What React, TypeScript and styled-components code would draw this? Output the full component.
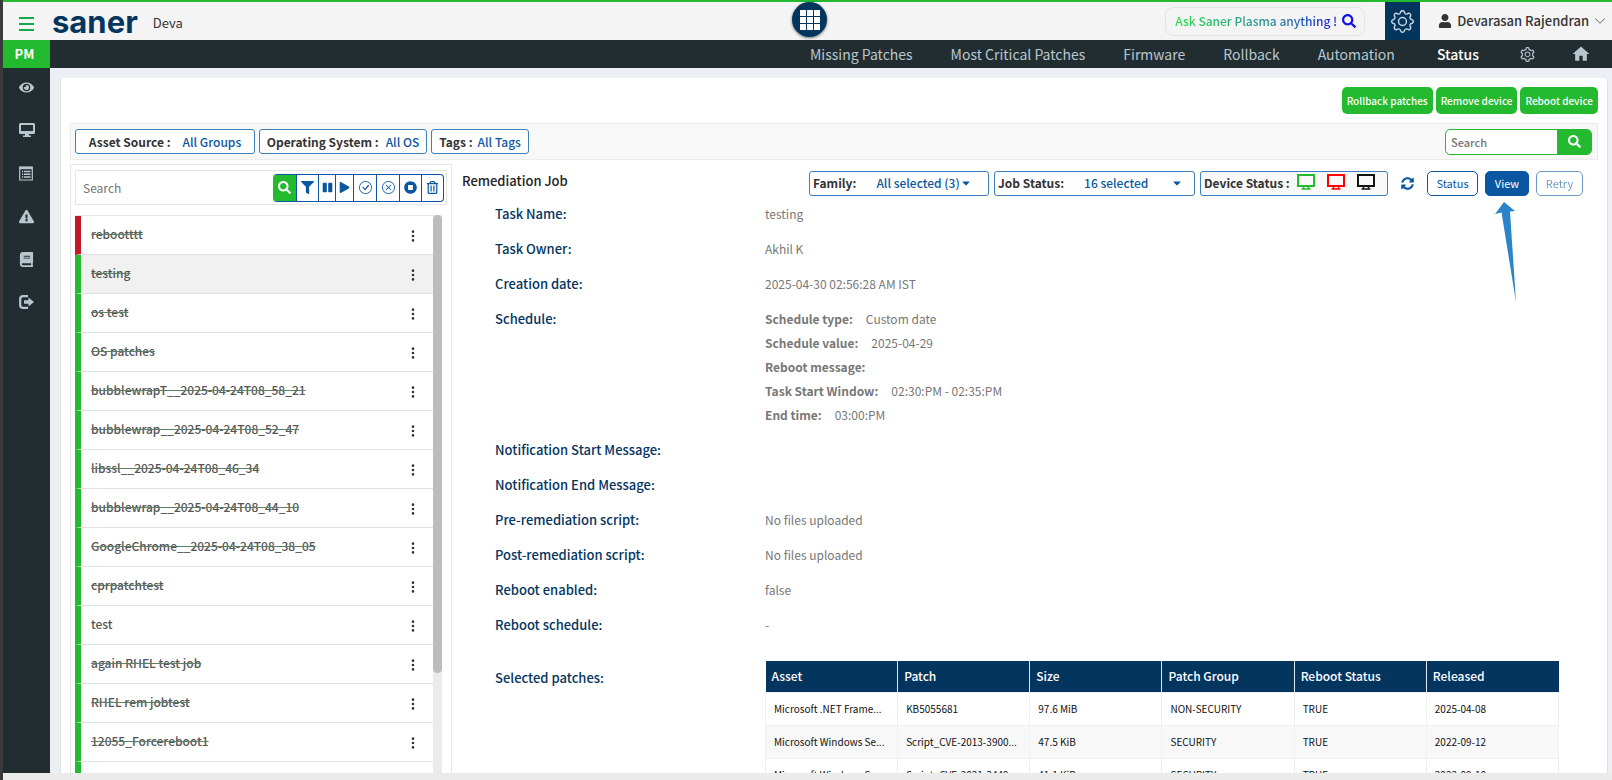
import React from 'react';
import styled, { createGlobalStyle, css } from 'styled-components';
import { FaSearch, FaFilter, FaPause, FaPlay, FaStopCircle, FaRegTrashAlt, FaEye, FaExclamationTriangle, FaBook, FaUser, FaSyncAlt, FaCaretDown } from 'react-icons/fa';
import { BsCheckCircle, BsXCircle, BsGear, BsChevronDown, BsThreeDotsVertical } from 'react-icons/bs';
import { AiOutlineSetting } from 'react-icons/ai';
import { MdHome } from 'react-icons/md';

const green = '#23ba2f';
const navy = '#04355f';
const blue = '#0a57a1';
const slate = '#222d32';
const sans = '"Noto Sans CJK SC", "Open Sans", sans-serif';

const GlobalStyle = createGlobalStyle`
  * { box-sizing: border-box; }
  body { margin: 0; background: #ebebeb; font-family: ${sans}; font-size: 12px; line-height: 20px; color: #333; }
  button, input { font: inherit; color: inherit; margin: 0; }
  button { padding: 0; border: 0; background: none; cursor: pointer; }
  input { min-width: 0; border: 0; outline: 0; background: none; }
  input::placeholder { color: #757575; opacity: 1; }
  a { color: inherit; text-decoration: none; }
  ul, dl, dd, h1, p { margin: 0; padding: 0; }
  ul { list-style: none; }
`;

const Shell = styled.div`
  height: 100vh;
  display: flex;
  flex-direction: column;
  border-left: 3px solid #3a3a3a;
  padding-bottom: 7px;
`;
const Header = styled.header`
  flex: none;
  display: flex;
  align-items: center;
  justify-content: space-between;
  height: 40px;
  border-top: 2px solid ${green};
  background: #f4f4f4;
`;
const HeaderSide = styled.div<{ $end?: boolean }>`
  flex: 1;
  height: 100%;
  display: flex;
  align-items: center;
  justify-content: ${p => (p.$end ? 'flex-end' : 'flex-start')};
`;
const MenuButton = styled.button`
  width: 15px;
  height: 14px;
  margin: 6px 18px 0 16px;
  display: flex;
  flex-direction: column;
  justify-content: space-between;
  span { width: 100%; height: 2px; background: #11a84b; }
`;
const Logo = styled.a`
  font: 700 31px/36px Inter, sans-serif;
  color: ${navy};
  margin-right: 15px;
  padding-top: 2px;
`;
const Account = styled.span`
  font-size: 13px;
  padding-top: 3px;
`;
const AppsButton = styled.button`
  width: 35px;
  height: 35px;
  margin: -3px 0 0 4px;
  border-radius: 50%;
  background: ${navy};
  box-shadow: 0 1px 3px #0008;
  display: flex;
  align-items: center;
  justify-content: center;
  svg { width: 20px; height: 20px; }
`;
const Ask = styled.button`
  height: 29px;
  margin-right: 20px;
  padding: 0 8px 0 9px;
  display: flex;
  align-items: center;
  gap: 5px;
  border: 1px solid #e4e4e4;
  border-radius: 8px;
  font-size: 12px;
  font-weight: 500;
  span {
    background: linear-gradient(90deg, #27e04a, #2a7fa0 65%, #1a1ae0);
    background-clip: text;
    color: transparent;
  }
  svg { color: #1414e6; font-size: 14px; }
`;
const SettingsButton = styled.button`
  width: 35px;
  height: 100%;
  display: flex;
  align-items: center;
  justify-content: center;
  background: ${navy};
  color: #c7d6e2;
  font-size: 23px;
`;
const UserButton = styled.button`
  display: flex;
  align-items: center;
  gap: 5px;
  padding: 0 6px 0 18px;
  font-size: 13px;
  font-weight: 500;
  svg:first-child { font-size: 14px; }
  svg:last-child { font-size: 12px; color: #666; }
`;
const Body = styled.div`
  flex: 1;
  min-height: 0;
  display: flex;
`;
const Sidebar = styled.nav`
  flex: none;
  width: 47px;
  background: ${slate};
  color: #b8c7ce;
`;
const Product = styled.div`
  height: 28px;
  background: ${green};
  color: #fff;
  font-size: 13px;
  font-weight: 700;
  line-height: 27px;
  padding-right: 4px;
  text-align: center;
`;
const SideList = styled.ul`
  display: flex;
  flex-direction: column;
  gap: 27px;
  padding: 11px 0 0 16px;
  a { display: flex; height: 16px; align-items: center; font-size: 15px; }
`;
const Main = styled.div`
  flex: 1;
  min-width: 0;
  display: flex;
  flex-direction: column;
`;
const NavBar = styled.nav`
  flex: none;
  height: 28px;
  display: flex;
  align-items: center;
  justify-content: flex-end;
  gap: 38px;
  padding-right: 21px;
  background: ${slate};
  color: #b8c7ce;
  font-size: 14px;
`;
const NavLink = styled.a<{ $on?: boolean }>`
  display: flex;
  color: ${p => (p.$on ? '#fff' : 'inherit')};
  font-weight: ${p => (p.$on ? 500 : 400)};
  margin-left: ${p => (p.$on ? 4 : 0)}px;
`;
const NavIcon = styled.a<{ $size: number }>`
  display: flex;
  width: 20px;
  justify-content: center;
  font-size: ${p => p.$size}px;
  & + & { margin-left: -4px; }
`;
const Page = styled.main`
  flex: 1;
  min-height: 0;
  padding: 10px 4px 0 10px;
  background: #ecf0f5;
  display: flex;
`;
const Card = styled.div`
  flex: 1;
  min-width: 0;
  display: flex;
  flex-direction: column;
  padding: 9px 9px 0;
  border: 1px solid #dce1ea;
  border-width: 0 1px;
  border-radius: 4px 4px 0 0;
  background: #fff;
  overflow: hidden;
`;
const Actions = styled.div`
  flex: none;
  display: flex;
  justify-content: flex-end;
  gap: 3px;
`;
const ActionButton = styled.button`
  height: 27px;
  padding: 0 5px;
  border-radius: 5px;
  background: ${green};
  color: #fff;
  font-size: 10px;
  font-weight: 500;
`;
const FilterBar = styled.div`
  flex: none;
  height: 37px;
  margin-top: 9px;
  padding: 0 5px 0 4px;
  display: flex;
  align-items: center;
  gap: 4px;
  background: #f8f8f8;
  border: 1px solid #ececec;
`;
const Select = styled.button<{ $w: number; $gap?: number; $start?: boolean; $tint?: boolean }>`
  width: ${p => p.$w}px;
  height: 25px;
  display: flex;
  align-items: center;
  justify-content: ${p => (p.$start ? 'flex-start' : 'center')};
  gap: ${p => p.$gap || 7}px;
  padding: 0 3px;
  border: 1px solid #3c7fbb;
  border-radius: 3px;
  background: ${p => (p.$tint ? '#f8f8f8' : '#fff')};
  color: ${blue};
  font-size: 12px;
  font-weight: 500;
  white-space: nowrap;
  b { color: #333; }
  span { display: flex; align-items: center; }
`;
const WideValue = styled.span`
  flex: 1;
  justify-content: space-between;
  padding-right: 8px;
`;
const AssetSearch = styled.form`
  margin-left: auto;
  width: 147px;
  height: 26px;
  display: flex;
  border: 1px solid ${green};
  border-radius: 5px;
  background: #fff;
  overflow: hidden;
  input { flex: 1; padding: 0 5px; font-size: 11px; font-weight: 500; }
  button { width: 34px; display: flex; align-items: center; justify-content: center; background: ${green}; color: #fff; font-size: 13px; }
`;
const Columns = styled.div`
  flex: 1;
  min-height: 0;
  display: flex;
  margin-top: 4px;
`;
const Jobs = styled.section`
  flex: none;
  width: 382px;
  display: flex;
  flex-direction: column;
  padding: 5px 4px 0;
  border: 1px solid #e6e6e6;
  border-bottom: 0;
`;
const JobTools = styled.form`
  flex: none;
  display: flex;
  align-items: center;
  height: 35px;
  padding: 0 2px 0 5px;
  border: 1px solid #e6e6e6;
  input { flex: 1; }
`;
const ToolGroup = styled.div`
  display: flex;
  height: 28px;
  border: 1px solid ${blue};
  border-left: 0;
  border-radius: 4px;
  overflow: hidden;
`;
const Tool = styled.button<{ $w: number; $on?: boolean }>`
  width: ${p => p.$w}px;
  display: flex;
  align-items: center;
  justify-content: center;
  font-size: 13px;
  color: ${blue};
  & + & { border-left: 1px solid ${blue}; }
  ${p => p.$w < 20 && css`font-size: 11px;`}
  ${p => p.$on && css`
    background: ${green};
    color: #fff;
    border-radius: 3px 0 0 3px;
    margin: -1px 0;
  `}
`;
const JobScroll = styled.div`
  flex: 1;
  min-height: 0;
  display: flex;
  margin: 10px 5px 0 0;
`;
const JobList = styled.ul`
  flex: 1;
  overflow: hidden;
  border-top: 1px solid #e8e8e8;
`;
const Track = styled.div`
  width: 9px;
  background: #ebebeb;
`;
const Thumb = styled.div`
  height: 82%;
  border-radius: 5px;
  background: #bcbcbc;
`;
const JobRow = styled.li<{ $tone: string; $on?: boolean }>`
  height: 39px;
  display: flex;
  align-items: center;
  justify-content: space-between;
  padding: 0 13px 2px 10px;
  border-left: 6px solid ${p => p.$tone};
  border-bottom: 1px solid #e2e2e2;
  background: ${p => (p.$on ? '#f1f1f1' : '#fff')};
  button { display: flex; font-size: 14px; color: #333; padding-top: 3px; }
`;
const JobName = styled.a<{ $done: boolean }>`
  font-size: 12px;
  font-weight: 500;
  color: #555;
  text-decoration: ${p => (p.$done ? 'line-through 1px #5f7f66' : 'none')};
`;
const Details = styled.section`
  flex: 1;
  min-width: 0;
  padding: 6px 15px 0 10px;
  display: flex;
  flex-direction: column;
`;
const DetailHead = styled.div`
  flex: none;
  display: flex;
  align-items: center;
  height: 26px;
  gap: 5px;
`;
const Title = styled.h1`
  flex: 1;
  font-size: 13px;
  font-weight: 500;
  line-height: 20px;
  padding-bottom: 4px;
  color: #222;
`;
const Devices = styled.span`
  gap: 12px;
  padding-bottom: 2px;
`;
const Refresh = styled.button`
  display: flex;
  margin: 0 8px;
  color: ${blue};
  font-size: 13px;
`;
const Pill = styled.button<{ $w: number; $on?: boolean }>`
  width: ${p => p.$w}px;
  height: 25px;
  margin-right: 2px;
  border: 1px solid ${blue};
  border-radius: 5px;
  font-size: 11px;
  color: ${p => (p.$on ? '#fff' : blue)};
  background: ${p => (p.$on ? blue : '#fff')};
  &:disabled { opacity: .6; margin-right: 0; }
`;
const DetailList = styled.dl`
  display: grid;
  grid-template-columns: 270px 1fr;
  row-gap: 15px;
  padding: 8px 24px 0 33px;
  font-size: 12px;
  color: #777;
`;
const Term = styled.dt<{ $gap?: number }>`
  font-size: 13px;
  font-weight: 500;
  color: ${navy};
  padding-top: ${p => p.$gap || 0}px;
`;
const Schedule = styled.dd`
  display: flex;
  flex-direction: column;
  gap: 4px;
  b { margin-right: 13px; }
`;
const PatchTable = styled.table`
  width: 100%;
  margin-top: 11px;
  table-layout: fixed;
  border-collapse: collapse;
  color: #111;
  font-size: 10px;
  th { height: 31px; padding: 0 6px; text-align: left; background: ${navy}; color: #fff; font-size: 12px; font-weight: 500; }
  th + th { border-left: 1px solid #dfe6ee; }
  td { height: 33px; padding: 0 8px; border: 1px solid #f0f0f0; white-space: nowrap; overflow: hidden; }
  tbody tr:nth-child(even) { background: #f8f8f8; }
`;
const Pointer = styled.svg`
  position: absolute;
  top: 31px;
  left: 10px;
  pointer-events: none;
`;
const PointerAnchor = styled.span`
  position: relative;
  display: flex;
`;

const MonitorIcon = ({ color }: { color: string }) => (
  <svg width="18" height="16" viewBox="0 0 18 16" fill="none" stroke={color} strokeWidth="2">
    <path d="M1 1H17V12H1Z" />
    <path d="M6.500 12.500V15M11.500 12.500V15M4.500 15H13.500" strokeWidth="1.500" />
  </svg>
);
const DesktopIcon = () => (
  <svg width="16" height="14" viewBox="0 0 16 14">
    <path d="M1.500 0H14.500Q16 0 16 1.500V9.500Q16 11 14.500 11H10V12.500H12V14H4V12.500H6V11H1.500Q0 11 0 9.500V1.500Q0 0 1.500 0ZM2 2V8H14V2Z" fill="currentColor" fillRule="evenodd" />
  </svg>
);
const ReportIcon = () => (
  <svg width="14" height="15" viewBox="0 0 14 15" fill="none" stroke="currentColor">
    <path d="M.7 1H13.3V14H.7Z" strokeWidth="1.2" />
    <path d="M.7 2H13.3" strokeWidth="2.4" />
    <path d="M3 5.5H4.2M5 5.5H11.5M3 8.2H4.2M5 8.2H11.5M3 10.9H4.2M5 10.9H11.5" strokeWidth="1.5" />
  </svg>
);
const ExitIcon = () => (
  <svg width="15" height="14" viewBox="0 0 15 14">
    <path d="M9 1.200H4Q1.200 1.200 1.200 4V10Q1.200 12.800 4 12.800H9" fill="none" stroke="currentColor" strokeWidth="2.200" />
    <path d="M5 5.200H9.500V2.500L15 7L9.500 11.500V8.800H5Z" fill="currentColor" />
  </svg>
);

const jobs: [string, boolean][] = [
  ['rebootttt', true], ['testing', true], ['os test', true], ['OS patches', true],
  ['bubblewrapT__2025-04-24T08_58_21', true], ['bubblewrap__2025-04-24T08_52_47', true],
  ['libssl__2025-04-24T08_46_34', true], ['bubblewrap__2025-04-24T08_44_10', true],
  ['GoogleChrome__2025-04-24T08_38_05', true], ['cprpatchtest', true], ['test', false],
  ['again RHEL test job', true], ['RHEL rem jobtest', true], ['12055_Forcereboot1', true],
];
const schedule = [
  ['Schedule type:', 'Custom date'], ['Schedule value:', '2025-04-29'], ['Reboot message:', ''],
  ['Task Start Window:', '02:30:PM - 02:35:PM'], ['End time:', '03:00:PM'],
];
const before = [['Task Name:', 'testing'], ['Task Owner:', 'Akhil K'], ['Creation date:', '2025-04-30 02:56:28 AM IST']];
const after = [
  ['Notification Start Message:', ''], ['Notification End Message:', ''],
  ['Pre-remediation script:', 'No files uploaded'], ['Post-remediation script:', 'No files uploaded'],
  ['Reboot enabled:', 'false'], ['Reboot schedule:', '-'],
];
const columns = ['Asset', 'Patch', 'Size', 'Patch Group', 'Reboot Status', 'Released'];
const patches = [
  ['Microsoft .NET Frame...', 'KB5055681', '97.6 MiB', 'NON-SECURITY', 'TRUE', '2025-04-08'],
  ['Microsoft Windows Se...', 'Script_CVE-2013-3900...', '47.5 KiB', 'SECURITY', 'TRUE', '2022-09-12'],
  ['Microsoft Windows Se...', 'Script_CVE-2021-3449...', '41.1 KiB', 'SECURITY', 'TRUE', '2022-09-18'],
];
const sideItems = [
  ['Visibility', <FaEye />], ['Devices', <DesktopIcon />], ['Reports', <ReportIcon />],
  ['Alerts', <FaExclamationTriangle />], ['Audit', <FaBook />], ['Sign out', <ExitIcon />],
] as [string, React.ReactNode][];

export default function App() {
  const stop = (e: React.FormEvent) => e.preventDefault();
  return (
    <Shell>
      <GlobalStyle />
      <Header>
        <HeaderSide>
          <MenuButton aria-label="Menu"><span /><span /><span /></MenuButton>
          <Logo href="#">saner</Logo>
          <Account>Deva</Account>
        </HeaderSide>
        <AppsButton aria-label="Apps">
          <svg viewBox="0 0 20 20" fill="#fff">
            {[0, 7, 14].map(y => [0, 7, 14].map(x => <rect key={`${x}-${y}`} x={x} y={y} width="6" height="6" />))}
          </svg>
        </AppsButton>
        <HeaderSide $end>
          <Ask><span>Ask Saner Plasma anything !</span><FaSearch /></Ask>
          <SettingsButton aria-label="Settings"><BsGear /></SettingsButton>
          <UserButton><FaUser />Devarasan Rajendran<BsChevronDown /></UserButton>
        </HeaderSide>
      </Header>
      <Body>
        <Sidebar>
          <Product>PM</Product>
          <SideList>
            {sideItems.map(([name, icon]) => <li key={name}><a href="#" aria-label={name}>{icon}</a></li>)}
          </SideList>
        </Sidebar>
        <Main>
          <NavBar>
            {['Missing Patches', 'Most Critical Patches', 'Firmware', 'Rollback', 'Automation', 'Status'].map(n => (
              <NavLink key={n} href="#" $on={n === 'Status'}>{n}</NavLink>
            ))}
            <NavIcon $size={17} href="#" aria-label="Configuration"><AiOutlineSetting /></NavIcon>
            <NavIcon $size={22} href="#" aria-label="Home"><MdHome /></NavIcon>
          </NavBar>
          <Page>
            <Card>
              <Actions>
                <ActionButton>Rollback patches</ActionButton>
                <ActionButton>Remove device</ActionButton>
                <ActionButton>Reboot device</ActionButton>
              </Actions>
              <FilterBar>
                <Select $w={180} $gap={12}><b>Asset Source :</b>All Groups</Select>
                <Select $w={168}><b>Operating System :</b>All OS</Select>
                <Select $w={98} $gap={5}><b>Tags :</b>All Tags</Select>
                <AssetSearch onSubmit={stop}>
                  <input aria-label="Search assets" placeholder="Search" />
                  <button aria-label="Search"><FaSearch /></button>
                </AssetSearch>
              </FilterBar>
              <Columns>
                <Jobs>
                  <JobTools onSubmit={stop}>
                    <input aria-label="Search jobs" placeholder="Search" />
                    <ToolGroup>
                      <Tool $w={23} $on aria-label="Search"><FaSearch /></Tool>
                      <Tool $w={22} type="button" aria-label="Filter"><FaFilter /></Tool>
                      <Tool $w={17} type="button" aria-label="Pause"><FaPause /></Tool>
                      <Tool $w={18} type="button" aria-label="Play"><FaPlay /></Tool>
                      <Tool $w={23} type="button" aria-label="Complete"><BsCheckCircle /></Tool>
                      <Tool $w={23} type="button" aria-label="Cancel"><BsXCircle /></Tool>
                      <Tool $w={22} type="button" aria-label="Stop"><FaStopCircle /></Tool>
                      <Tool $w={22} type="button" aria-label="Delete"><FaRegTrashAlt /></Tool>
                    </ToolGroup>
                  </JobTools>
                  <JobScroll>
                    <JobList>
                      {jobs.map(([name, done], i) => (
                        <JobRow key={name} $tone={i ? green : '#c3182c'} $on={i === 1}>
                          <JobName href="#" $done={done}>{name}</JobName>
                          <button aria-label={`Options for ${name}`}><BsThreeDotsVertical /></button>
                        </JobRow>
                      ))}
                      <JobRow $tone={green} />
                    </JobList>
                    <Track><Thumb /></Track>
                  </JobScroll>
                </Jobs>
                <Details>
                  <DetailHead>
                    <Title>Remediation Job</Title>
                    <Select $w={180} $gap={20} $start><b>Family:</b><span>All selected (3)<FaCaretDown /></span></Select>
                    <Select $w={201} $gap={20} $start><b>Job Status:</b><WideValue>16 selected<FaCaretDown /></WideValue></Select>
                    <Select $w={188} $start $tint>
                      <b>Device Status :</b>
                      <Devices><MonitorIcon color={green} /><MonitorIcon color="#f00" /><MonitorIcon color="#111" /></Devices>
                    </Select>
                    <Refresh aria-label="Refresh"><FaSyncAlt /></Refresh>
                    <Pill $w={51}>Status</Pill>
                    <PointerAnchor>
                      <Pill $w={44} $on>View</Pill>
                      <Pointer width="21" height="100" viewBox="0 0 21 100" fill="#2b83c9">
                        <path d="M9 0L20 9L15 9.500L21 100L6.500 10.500L0 12Z" />
                      </Pointer>
                    </PointerAnchor>
                    <Pill $w={47} disabled>Retry</Pill>
                  </DetailHead>
                  <DetailList>
                    {before.map(([k, v]) => <React.Fragment key={k}><Term>{k}</Term><dd>{v}</dd></React.Fragment>)}
                    <Term>Schedule:</Term>
                    <Schedule>
                      {schedule.map(([k, v]) => <p key={k}><b>{k}</b>{v}</p>)}
                    </Schedule>
                    {after.map(([k, v]) => <React.Fragment key={k}><Term>{k}</Term><dd>{v}</dd></React.Fragment>)}
                    <Term $gap={18}>Selected patches:</Term>
                    <dd>
                      <PatchTable>
                        <thead><tr>{columns.map(c => <th key={c}>{c}</th>)}</tr></thead>
                        <tbody>
                          {patches.map((r, i) => <tr key={i}>{r.map((c, j) => <td key={j}>{c}</td>)}</tr>)}
                        </tbody>
                      </PatchTable>
                    </dd>
                  </DetailList>
                </Details>
              </Columns>
            </Card>
          </Page>
        </Main>
      </Body>
    </Shell>
  );
}
